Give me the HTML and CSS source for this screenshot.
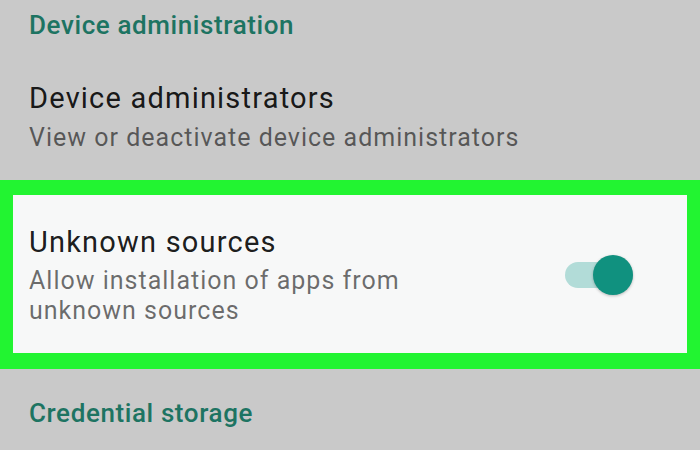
FILE: index.html
```html
<!DOCTYPE html>
<html lang="en">
<head>
    <meta charset="UTF-8">
    <title>Security</title>
    <link rel="stylesheet" href="styles.css">
</head>
<body>
    <div class="category">Device administration</div>

    <div class="pref">
        <div class="pref-text">
            <div class="pref-title">Device administrators</div>
            <div class="pref-summary">View or deactivate device administrators</div>
        </div>
    </div>

    <div class="highlight">
        <div class="pref pref-on">
            <div class="pref-text">
                <div class="pref-title">Unknown sources</div>
                <div class="pref-summary">Allow installation of apps from unknown sources</div>
            </div>
            <div class="switch">
                <span class="track"></span>
                <span class="thumb"></span>
            </div>
        </div>
    </div>

    <div class="category category-next">Credential storage</div>
</body>
</html>
```

FILE: styles.css
```css
*{
    margin:0;
    padding:0;
    box-sizing:border-box;
}

body{
    width:700px;
    height:450px;
    overflow:hidden;
    background-color:#c9c9c9;
    font-family:Roboto, "Liberation Sans", sans-serif;
}

.category{
    padding:10px 29px 0;
    font-size:26px;
    line-height:30px;
    font-weight:500;
    letter-spacing:.6px;
    color:#1d7462;
}

.category-next{
    padding-top:29px;
}

.pref{
    display:flex;
    align-items:center;
    padding:40px 29px 27px;
}

.pref-text{
    flex:1;
}

.pref-title{
    font-size:29px;
    line-height:36px;
    letter-spacing:1.2px;
    color:rgba(0,0,0,.9);
    margin-bottom:7px;
}

.pref-summary{
    font-size:25px;
    line-height:30px;
    letter-spacing:1px;
    color:rgba(0,0,0,.58);
}

/* the green frame round the chosen row */
.highlight{
    border-style:solid;
    border-color:#22f431;
    border-width:15px 13px 16px;
    background-color:#f7f8f8;
}

.highlight .pref{
    padding:29px 0 27px 16px;
}

.highlight .pref-title{
    margin-bottom:6px;
}

.switch{
    position:relative;
    width:68px;
    height:40px;
    margin:0 54px 0 76px;
}

.switch .track{
    position:absolute;
    left:0;
    right:0;
    top:7px;
    height:26px;
    border-radius:13px;
    background-color:#b2dcd8;
}

.switch .thumb{
    position:absolute;
    right:0;
    top:0;
    width:40px;
    height:40px;
    border-radius:50%;
    background-color:#10917f;
    box-shadow:0 1px 3px rgba(0,0,0,.25);
}
```
